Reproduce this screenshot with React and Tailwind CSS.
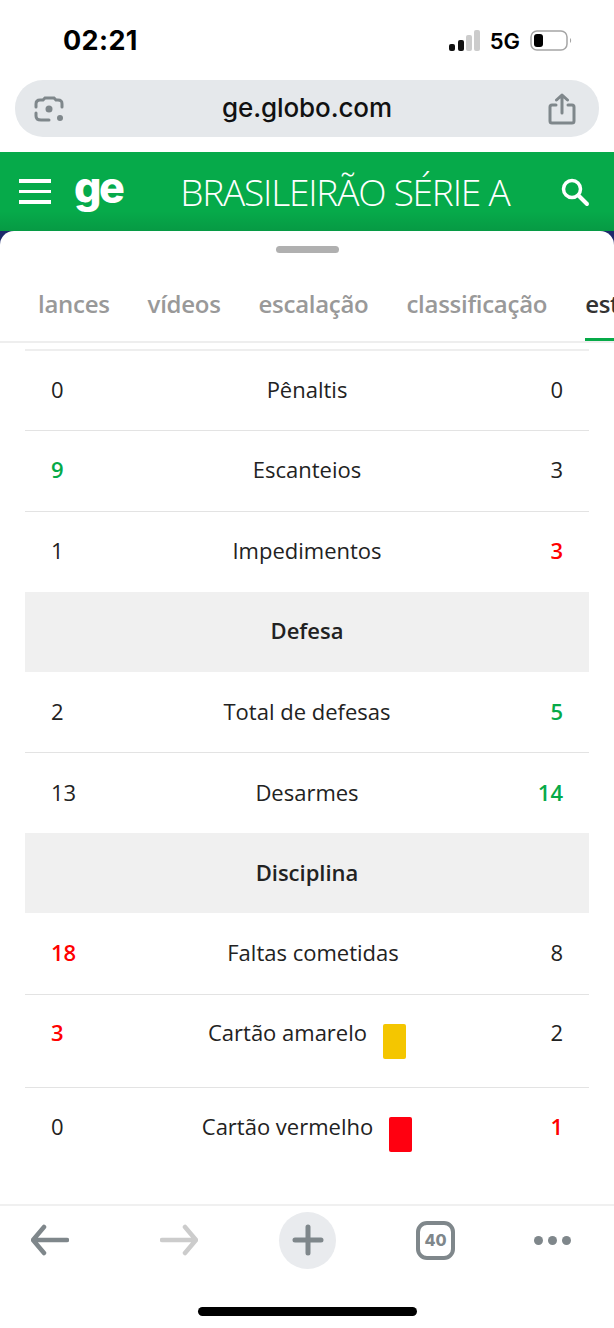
function Row({ left, label, right, leftColor = 'font-medium text-[#222]', rightColor = 'font-medium text-[#222]', card, labelClass = '', className = 'h-[81px] items-center border-b pb-[4px]' }) {
  return (
    <div className={`flex border-[#e3e3e3] px-[26px] text-[22px] text-[#222] ${className}`}>
      <span className={`w-[60px] ${leftColor}`}>{left}</span>
      <span className={`flex flex-1 justify-center gap-4 ${labelClass}`}>
        <span>{label}</span>
        {card && <span className={`h-[35px] w-[23px] rounded-[2px] ${card}`}></span>}
      </span>
      <span className={`w-[60px] text-right ${rightColor}`}>{right}</span>
    </div>
  )
}

function Section({ title, className = 'pb-[4px]' }) {
  return <div className={`-mt-px flex h-[80px] items-center justify-center bg-[#f0f0f0] text-[22px] font-semibold text-[#222] ${className}`}>{title}</div>
}

export default function App() {
  const green = 'font-semibold text-[#06aa48]'
  const red = 'font-semibold text-[#ff0000]'
  const lowerRow = 'h-[81px] items-center border-b pb-[2px]'
  return (
    <div className="flex h-[1328px] w-[614px] flex-col overflow-hidden bg-white font-['Open_Sans',sans-serif]">
      {/* status bar */}
      <div className="flex h-[80px] shrink-0 items-start justify-between pl-[63px] pr-[42px] pt-[24px]">
        <span className="font-['Inter',sans-serif] text-[27px] font-bold leading-[34px] tracking-[0.4px] text-black">02:21</span>
        <div className="mt-[6px] flex items-center">
          <svg width="32" height="22" viewBox="0 0 32 22">
            <rect x="0" y="14" width="6" height="7" rx="2" fill="#111" />
            <rect x="9" y="10" width="6" height="11" rx="2" fill="#111" />
            <rect x="17" y="5" width="6" height="16" rx="2" fill="#ccc" />
            <rect x="25" y="0" width="6" height="21" rx="2" fill="#ccc" />
          </svg>
          <span className="ml-[9px] font-['Inter',sans-serif] text-[22px] font-semibold leading-[22px] text-black">5G</span>
          <svg className="ml-[10px]" width="42" height="22" viewBox="0 0 42 22">
            <rect x="1" y="1" width="36" height="19" rx="6" fill="none" stroke="#a5a5a5" strokeWidth="1.5" />
            <rect x="4" y="4" width="9" height="13" rx="3" fill="#000" />
            <path d="M40 8c1.5 1 1.5 4 0 5z" fill="#a5a5a5" />
          </svg>
        </div>
      </div>

      {/* url bar */}
      <div className="mx-[15px] flex h-[57px] shrink-0 items-center justify-between rounded-[28px] bg-[#e5e8eb] pl-[19px] pr-[23px]">
        <svg width="32" height="32" viewBox="0 0 32 32" fill="none" stroke="#7f878b" strokeWidth="3" strokeLinecap="round">
          <path d="M2 14v-3c0-3 2-4 4-4h3l2-2h9l2 2h2c3 0 4 1 4 4v3" />
          <path d="M2 20v3c0 3 2 4 5 4h8" />
          <circle cx="15" cy="16" r="3.5" fill="#7f878b" stroke="none" />
          <circle cx="26" cy="25" r="3" fill="#7f878b" stroke="none" />
        </svg>
        <span className="mb-[2px] font-['Inter',sans-serif] text-[26px] font-medium leading-none tracking-[-0.1px] text-[#111]">ge.globo.com</span>
        <svg width="28" height="32" viewBox="0 0 28 32" fill="none" stroke="#7f878b" strokeWidth="3" strokeLinecap="round" strokeLinejoin="round">
          <path d="M8 12H4a2 2 0 0 0-2 2v14a2 2 0 0 0 2 2h20a2 2 0 0 0 2-2V14a2 2 0 0 0-2-2h-4" />
          <path d="M14 20V2M8.5 7 14 2l5.5 5" />
        </svg>
      </div>

      {/* green header */}
      <div className="mt-[15px] flex h-[79px] shrink-0 items-center bg-[linear-gradient(#06aa4a_75%,#069a44)] pl-[19px] pr-[24px]">
        <div className="flex w-[32px] flex-col gap-[7px]">
          <span className="h-[3.5px] bg-white"></span>
          <span className="h-[3.5px] bg-white"></span>
          <span className="h-[3.5px] bg-white"></span>
        </div>
        <span className="ml-[23px] pb-[10px] font-['Inter',sans-serif] text-[43px] font-extrabold leading-[44px] tracking-[-2.5px] text-white">ge</span>
        <span className="ml-[58px] flex-1 whitespace-nowrap text-[37px] font-light leading-none tracking-[-1.2px] text-white">BRASILEIRÃO SÉRIE A</span>
        <svg width="30" height="30" viewBox="0 0 30 30" fill="none" stroke="#fff" strokeLinecap="round">
          <circle cx="12" cy="12" r="8.5" strokeWidth="3.5" />
          <path d="m19 19 8 8" strokeWidth="4" />
        </svg>
      </div>

      {/* sheet */}
      <div className="flex flex-1 flex-col bg-[#1d2a6b]">
        <div className="flex flex-1 flex-col rounded-t-[14px] bg-white">
          <div className="mx-auto mt-[15px] h-[7px] w-[63px] shrink-0 rounded-full bg-[#b0b0b0]"></div>
          <div className="mt-[21px] flex h-[69px] shrink-0 gap-[38px] overflow-hidden whitespace-nowrap border-b-2 border-[#eee] pl-[38px] text-[24px] font-semibold leading-[60px] tracking-[-0.28px] text-[#999]">
            <span>lances</span>
            <span>vídeos</span>
            <span>escalação</span>
            <span>classificação</span>
            <span className="relative text-[#333]">
              estatísticas
              <span className="absolute bottom-0 left-0 h-[3px] w-full bg-[#06aa48]"></span>
            </span>
          </div>

          <div className="mx-[25px] mt-[6px] border-t-2 border-[#eee]">
            <Row left="0" label="Pênaltis" right="0" className="h-[80px] items-center border-b pb-[2px]" />
            <Row left="9" leftColor={green} label="Escanteios" right="3" />
            <Row left="1" label="Impedimentos" right="3" rightColor={red} />
            <Section title="Defesa" />
            <Row left="2" label="Total de defesas" right="5" rightColor={green} className={lowerRow} />
            <Row left="13" label="Desarmes" right="14" rightColor={green} className={lowerRow} />
            <Section title="Disciplina" className="pb-[2px]" />
            <Row left="18" leftColor={red} label="Faltas cometidas" labelClass="pl-[12px]" right="8" className="h-[82px] items-center border-b pb-[2px]" />
            <Row left="3" leftColor={red} label="Cartão amarelo" right="2" card="mt-[8px] bg-[#f4c600]" className="h-[93px] border-b pt-[21px]" />
            <Row left="0" label="Cartão vermelho" right="1" rightColor={red} card="mt-[7px] bg-[#ff0010]" className="h-[83px] pt-[22px]" />
          </div>

          {/* browser toolbar */}
          <div className="mt-auto flex h-[124px] shrink-0 flex-col border-t-2 border-[#f0f0f0] bg-white">
            <div className="flex h-[68px] items-center pl-[31px]">
              <svg width="38" height="32" viewBox="0 0 38 32" fill="none" stroke="#7f878b" strokeWidth="4.5" strokeLinecap="round" strokeLinejoin="round">
                <path d="M36 16H3M13 3 2 16l11 13" />
              </svg>
              <svg className="ml-[91px]" width="38" height="32" viewBox="0 0 38 32" fill="none" stroke="#ccc" strokeWidth="4.5" strokeLinecap="round" strokeLinejoin="round">
                <path d="M2 16h33M25 3l11 13-11 13" />
              </svg>
              <div className="ml-[81px] flex h-[57px] w-[57px] items-center justify-center rounded-full bg-[#e9ebee]">
                <svg width="32" height="32" viewBox="0 0 32 32" stroke="#7f878b" strokeWidth="5" strokeLinecap="round">
                  <path d="M16 3v26M3 16h26" />
                </svg>
              </div>
              <div className="ml-[80px] flex h-[39px] w-[39px] items-center justify-center rounded-[11px] border-[4px] border-[#7f878b] font-['Inter',sans-serif] text-[16px] font-extrabold leading-none text-[#7f878b]">40</div>
              <div className="ml-[79px] flex gap-[5px]">
                <span className="h-[9px] w-[9px] rounded-full bg-[#7f878b]"></span>
                <span className="h-[9px] w-[9px] rounded-full bg-[#7f878b]"></span>
                <span className="h-[9px] w-[9px] rounded-full bg-[#7f878b]"></span>
              </div>
            </div>
            <div className="mx-auto mt-[33px] h-[9px] w-[219px] rounded-full bg-black"></div>
          </div>
        </div>
      </div>
    </div>
  )
}
